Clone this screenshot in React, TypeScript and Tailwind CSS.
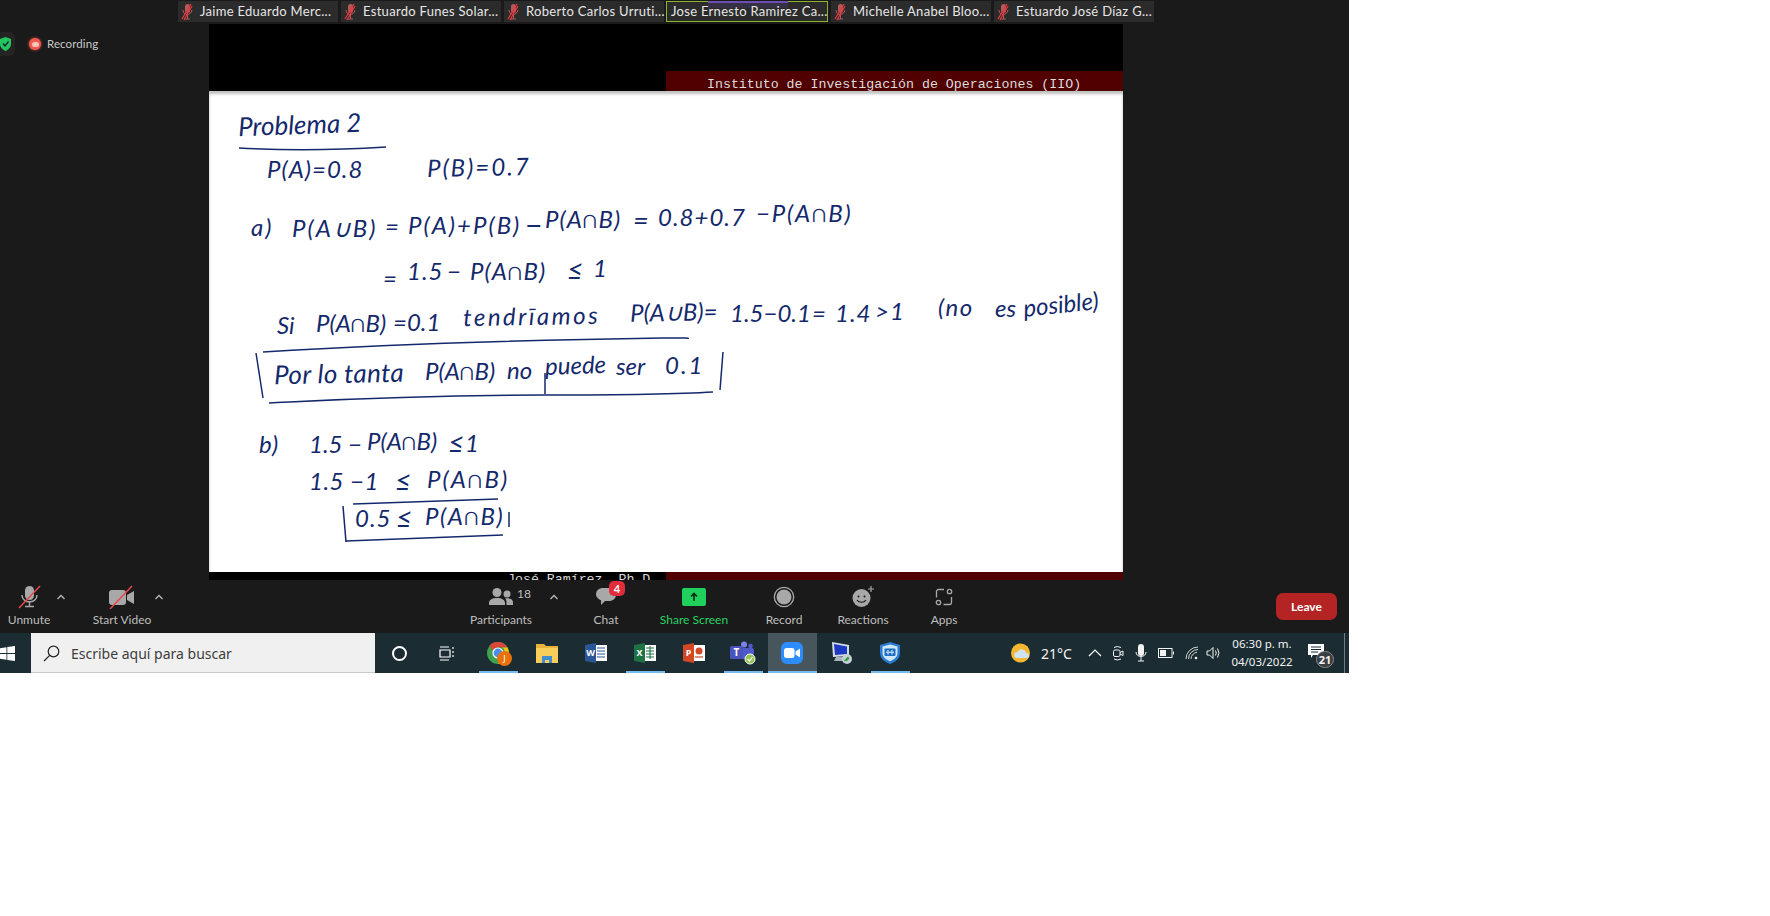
const ink = [
  { t: "Problema 2", c: "left-[29px] top-[20px] text-[26px] -rotate-2" },
  { t: "P(A)=0.8", c: "left-[58px] top-[66px] tracking-[1px]" },
  { t: "P(B)=0.7", c: "left-[218px] top-[64px] tracking-[2px] -rotate-1" },
  { t: "a)", c: "left-[42px] top-[124px] tracking-[2px]" },
  { t: "P(A∪B)", c: "left-[83px] top-[125px] tracking-[2px]" },
  { t: "=", c: "left-[176px] top-[123px]" },
  { t: "P(A)+P(B)", c: "left-[199px] top-[122px] tracking-[2px]" },
  { t: "−", c: "left-[316px] top-[118px] text-[30px]" },
  { t: "P(A∩B)", c: "left-[336px] top-[116px] tracking-[1px]" },
  { t: "=", c: "left-[424px] top-[115px] text-[27px]" },
  { t: "0.8+0.7", c: "left-[449px] top-[114px] tracking-[1px]" },
  { t: "−P(A∩B)", c: "left-[547px] top-[110px] tracking-[1.800px]" },
  { t: "=", c: "left-[174px] top-[175px] text-[18px]" },
  { t: "1.5", c: "left-[198px] top-[168px] tracking-[1px]" },
  { t: "−", c: "left-[238px] top-[168px]" },
  { t: "P(A∩B)", c: "left-[261px] top-[168px] tracking-[1px]" },
  { t: "≤", c: "left-[358px] top-[164px] text-[28px]" },
  { t: "1", c: "left-[384px] top-[165px]" },
  { t: "Si", c: "left-[68px] top-[222px] text-[22px]" },
  { t: "P(A∩B)", c: "left-[107px] top-[220px] text-[21px]" },
  { t: "=0.1", c: "left-[184px] top-[219px] text-[21px]" },
  { t: "tendrīamos", c: "left-[254px] top-[213px] tracking-[2.500px] -rotate-1" },
  { t: "P(A∪B)=", c: "left-[421px] top-[209px] text-[22px] -rotate-1" },
  { t: "1.5−0.1", c: "left-[521px] top-[210px] text-[22px]" },
  { t: "=", c: "left-[603px] top-[210px] text-[20px]" },
  { t: "1.4", c: "left-[626px] top-[210px] text-[21px] tracking-[1px]" },
  { t: ">1", c: "left-[666px] top-[208px] tracking-[1px]" },
  { t: "(no", c: "left-[729px] top-[204px] tracking-[1.500px]" },
  { t: "es", c: "left-[786px] top-[205px] text-[20px]" },
  { t: "posible)", c: "left-[814px] top-[201px] text-[23px] -rotate-6" },
  { t: "Por lo tanta", c: "left-[65px] top-[269px] text-[26px] tracking-[0.400px] -rotate-1" },
  { t: "P(A∩B)", c: "left-[216px] top-[268px] text-[21px]" },
  { t: "no", c: "left-[298px] top-[267px] text-[21px]" },
  { t: "puede", c: "left-[336px] top-[262px] text-[22px] -rotate-2" },
  { t: "ser", c: "left-[407px] top-[263px] text-[21px]" },
  { t: "0.1", c: "left-[456px] top-[262px] tracking-[2px]" },
  { t: "b)", c: "left-[50px] top-[341px] tracking-[1px]" },
  { t: "1.5 −", c: "left-[100px] top-[341px]" },
  { t: "P(A∩B)", c: "left-[158px] top-[338px]" },
  { t: "≤", c: "left-[239px] top-[337px] text-[28px]" },
  { t: "1", c: "left-[256px] top-[340px]" },
  { t: "1.5 −1", c: "left-[100px] top-[378px] tracking-[0.500px]" },
  { t: "≤", c: "left-[186px] top-[375px] text-[28px]" },
  { t: "P(A∩B)", c: "left-[218px] top-[376px] tracking-[2px]" },
  { t: "0.5", c: "left-[146px] top-[415px] tracking-[1px]" },
  { t: "≤", c: "left-[187px] top-[412px] text-[28px]" },
  { t: "P(A∩B)", c: "left-[216px] top-[413px] tracking-[1.500px]" },
];

const names = ["Jaime Eduardo Merc...", "Estuardo Funes Solar...", "Roberto Carlos Urruti..."];
const names2 = ["Michelle Anabel Bloo...", "Estuardo José Díaz G..."];

function MutedMic() {
  return (
    <svg width="12" height="18" viewBox="0 0 12 18" className="shrink-0">
      <rect x="4" y="1" width="5" height="9" rx="2.500" fill="#b25a5a" />
      <path d="M2 7c0 6 8 6 9 0M6.500 12v4M4 16h5" stroke="#b25a5a" fill="none" />
      <path d="M1 16 10 1M3 17 11 3" stroke="#e2383f" strokeWidth="1.300" />
    </svg>
  );
}

function Thumb({ name }: { name: string }) {
  return (
    <div className="w-[160px] h-[21px] bg-[#2b2b2b] flex items-center pl-[3px] gap-[7px] text-[13px] tracking-[0.300px] text-[#e6e6e6] whitespace-nowrap">
      <MutedMic />
      <span>{name}</span>
    </div>
  );
}

function Caret({ className }: { className: string }) {
  return (
    <svg width="10" height="6" viewBox="0 0 10 6" className={className}>
      <path d="M1.500 5 5 1.500 8.500 5" stroke="#b8b8b8" strokeWidth="1.300" fill="none" />
    </svg>
  );
}

function Tool({ label, className, color, children }: { label: string; className: string; color?: string; children: React.ReactNode }) {
  return (
    <div className={`flex flex-col items-center shrink-0 ${className}`}>
      <div className="h-[26px] flex items-center justify-center relative">{children}</div>
      <span className={`mt-[3px] text-[12px] leading-[14px] whitespace-nowrap ${color ?? "text-[#bebebe]"}`}>{label}</span>
    </div>
  );
}

function TaskIcon({ active, current, children }: { active?: boolean; current?: boolean; children: React.ReactNode }) {
  return (
    <div className={`relative w-[49px] h-full shrink-0 flex items-center justify-center ${current ? "bg-[#46565c]" : ""}`}>
      {children}
      {active && <div className={`absolute bottom-0 h-[2px] bg-[#76b9ed] ${current ? "inset-x-0" : "inset-x-[5px]"}`} />}
    </div>
  );
}

export default function App() {
  return (
    <div className="w-[1770px] h-[916px] bg-white font-['Lato',sans-serif]">
      <div className="w-[1349px] h-[673px] bg-[#1a1a1a] flex flex-col overflow-hidden relative">
        {/* participant strip */}
        <div className="h-[24px] shrink-0 pt-px pl-[178px] flex items-start gap-[3px]">
          {names.map((n) => (
            <Thumb key={n} name={n} />
          ))}
          <div className="relative w-[162px] h-[21px] -ml-px bg-[#2b2b2b] border border-[#8ab62f] flex items-center pl-[4px] text-[13px] tracking-[0.300px] text-[#e6e6e6] whitespace-nowrap">
            <div className="absolute top-[-1px] left-[41px] w-[80px] h-[2px] bg-[#6d4fb3]" />
            <div className="absolute top-px left-[41px] w-[80px] h-[5px] bg-[#3a3350] opacity-70" />
            <span className="relative">Jose Ernesto Ramirez Ca...</span>
          </div>
          {names2.map((n) => (
            <Thumb key={n} name={n} />
          ))}
        </div>

        {/* recording badges */}
        <div className="absolute left-0 top-[32px] w-[15px] h-[24px] bg-[#242424] rounded-r-md flex items-center justify-end pr-[4px]">
          <svg width="11" height="14" viewBox="0 0 11 14">
            <path d="M5.500 0 11 2v5c0 3.500-2.500 5.500-5.500 7C2.500 12.500 0 10.500 0 7V2z" fill="#22c55e" />
            <path d="M3 6.500 5 9l3.500-4.500" stroke="#123" strokeWidth="1.300" fill="none" />
          </svg>
        </div>
        <div className="absolute left-[29px] top-[36px] flex items-center gap-[6px] text-[11.500px] tracking-[0.100px] leading-[16px] text-[#c8c8c8]">
          <div className="w-[12px] h-[12px] rounded-full bg-[#f0594f] flex items-center justify-center shadow-[0_0_3px_#e5533d]">
            <div className="w-[7px] h-[5px] rounded-sm bg-[#ffc4b8]" />
          </div>
          Recording
        </div>

        {/* shared screen */}
        <div className="ml-[209px] w-[914px] h-[556px] shrink-0 bg-black flex flex-col">
          <div className="h-[67px] shrink-0 flex justify-end">
            <div className="w-[457px] mt-[47px] h-[20px] bg-[#500000] font-['Liberation_Mono',monospace] text-[13.270px] leading-[20px] text-[#dcdcdc] pl-[41px] pt-[4px] whitespace-nowrap overflow-hidden">
              Instituto de Investigación de Operaciones (IIO)
            </div>
          </div>
          <div className="relative h-[481px] shrink-0 bg-white shadow-[inset_0_3px_3px_rgba(0,0,0,0.25)] overflow-hidden font-['Lato',sans-serif] italic text-[#14296b]">
            {ink.map((s, i) => (
              <span key={i} className={`absolute whitespace-nowrap leading-none text-[24px] ${s.c}`}>
                {s.t}
              </span>
            ))}
            <svg className="absolute inset-0" width="914" height="481" viewBox="0 0 914 481" fill="none" stroke="#14296b" strokeWidth="1.500">
              <path d="M30 57q70 4 147-1" />
              <path d="M54 261C120 257 250 250 454 247c30 0 25 0 25 1" />
              <path d="M47 262l7 45" />
              <path d="M60 312c60-3 140-8 276-8 60 0 120 0 168-3" />
              <path d="M514 261l-3 38" />
              <path d="M336 282v21" />
              <path d="M144 413l145-5" />
              <path d="M134 415l3 36" />
              <path d="M137 450l157-6" />
              <path d="M300 421v15" />
            </svg>
          </div>
          <div className="h-[8px] shrink-0 flex overflow-hidden">
            <div className="w-[457px] bg-black text-[#d8d8d8] font-['Liberation_Mono',monospace] text-[13.270px] leading-[16px] pl-[298px] whitespace-nowrap">
              José Ramírez, Ph.D
            </div>
            <div className="flex-1 bg-[#500000]" />
          </div>
        </div>

        {/* zoom toolbar */}
        <div className="h-[53px] shrink-0 flex items-start pt-[4px]">
          <Tool label="Unmute" className="w-[50px] ml-[4px]">
            <svg width="30" height="24" viewBox="0 0 30 24">
              <rect x="11" y="1" width="9" height="14" rx="4.500" fill="#a8a8a8" />
              <path d="M8 10c0 9 15 9 15 0M15.500 16v5M11 21.500h9" stroke="#a8a8a8" strokeWidth="1.500" fill="none" />
              <path d="M5 23 26 1" stroke="#e5484d" strokeWidth="1.500" />
            </svg>
          </Tool>
          <Caret className="shrink-0 ml-[2px] mt-[10px]" />
          <Tool label="Start Video" className="w-[62px] ml-[25px]">
            <svg width="28" height="24" viewBox="0 0 28 24">
              <rect x="1" y="5" width="17" height="15" rx="3" fill="#a8a8a8" />
              <path d="M19 10l7-4v13l-7-4z" fill="#a8a8a8" />
              <path d="M2 24 24 1" stroke="#e5484d" strokeWidth="1.500" />
            </svg>
          </Tool>
          <Caret className="shrink-0 ml-[1px] mt-[10px]" />
          <Tool label="Participants" className="w-[80px] ml-[297px]">
            <svg width="24" height="18" viewBox="0 0 24 18">
              <circle cx="8" cy="4.500" r="4.500" fill="#a8a8a8" />
              <circle cx="18" cy="6" r="3.500" fill="#a8a8a8" />
              <path d="M0 17v-2c0-3 3-5 8-5s8 2 8 5v2zM17.500 17v-3c0-1-.5-3-1.500-3.500 5-1 8 1 8 4V17z" fill="#a8a8a8" />
            </svg>
            <span className="absolute left-full ml-[4px] top-[3px] text-[12px] leading-[14px] text-[#bebebe]">18</span>
          </Tool>
          <Caret className="shrink-0 ml-[8px] mt-[10px]" />
          <Tool label="Chat" className="w-[40px] ml-[27px]">
            <svg width="20" height="18" viewBox="0 0 20 18">
              <path d="M7 0h6c4 0 7 2.500 7 6.500S17 13 13 13H9l-4 4v-4.800C2 11 0 9 0 6.500 0 2.500 3 0 7 0z" fill="#a8a8a8" />
            </svg>
            <span className="absolute left-[13px] top-[-3px] w-[16px] h-[15px] rounded-[5px] bg-[#e02d3c] text-white text-[11px] font-bold leading-[15px] text-center">4</span>
          </Tool>
          <Tool label="Share Screen" className="w-[80px] ml-[28px]" color="text-[#27d163]">
            <div className="w-[24px] h-[18px] rounded-[2px] bg-[#1fd15c] flex items-center justify-center">
              <svg width="10" height="10" viewBox="0 0 10 10">
                <path d="M5 9V2M2 4.500 5 1.500l3 3" stroke="#0b2a16" strokeWidth="1.600" fill="none" />
              </svg>
            </div>
          </Tool>
          <Tool label="Record" className="w-[50px] ml-[25px]">
            <svg width="22" height="22" viewBox="0 0 22 22">
              <circle cx="11" cy="11" r="9.700" stroke="#a8a8a8" strokeWidth="1.300" fill="none" />
              <circle cx="11" cy="11" r="7.500" fill="#a8a8a8" />
            </svg>
          </Tool>
          <Tool label="Reactions" className="w-[60px] ml-[24px]">
            <svg width="24" height="24" viewBox="0 0 24 24">
              <circle cx="10.500" cy="13" r="9" fill="#a8a8a8" />
              <circle cx="7.500" cy="11.500" r="1" fill="#1a1a1a" />
              <circle cx="13.500" cy="11.500" r="1" fill="#1a1a1a" />
              <path d="M6 15c2 3 7 3 9 0" stroke="#1a1a1a" strokeWidth="1.200" fill="none" />
              <path d="M20 1v6M17 4h6" stroke="#a8a8a8" strokeWidth="1.200" />
            </svg>
          </Tool>
          <Tool label="Apps" className="w-[40px] ml-[31px]">
            <svg width="18" height="18" viewBox="0 0 18 18" fill="none" stroke="#a8a8a8" strokeWidth="1.300">
              <path d="M9 1.500H3.500a2 2 0 0 0-2 2v6M8.500 16.500h6a2 2 0 0 0 2-2V9" />
              <circle cx="14.500" cy="3.500" r="2.200" />
              <circle cx="3.500" cy="14.500" r="2.200" />
            </svg>
          </Tool>
          <div className="ml-auto mr-[12px] mt-[9px] w-[61px] h-[27px] rounded-[7px] bg-[#b42424] flex items-center justify-center text-white text-[12px] font-bold">
            Leave
          </div>
        </div>

        {/* windows taskbar */}
        <div className="h-[40px] shrink-0 bg-[#1b2d33] flex items-stretch font-['Noto_Sans',sans-serif] text-white">
          <div className="w-[31px] shrink-0 flex items-center">
            <svg width="15" height="15" viewBox="0 0 15 15" fill="#fff">
              <path d="M0 2.200 6.500 1.200V7H0zM7.300 1.100 15 0v7H7.300zM0 8h6.500v5.800L0 12.800zM7.300 8H15v7l-7.700-1.100z" />
            </svg>
          </div>
          <div className="w-[344px] shrink-0 bg-[#f0f0f0] flex items-center pl-[12px] pt-px gap-[11px] text-[14px] text-[#3d3d3d] border-b border-[#c9c9c9]">
            <svg width="17" height="17" viewBox="0 0 17 17" fill="none" stroke="#222" strokeWidth="1.200">
              <circle cx="10.500" cy="6.500" r="5.300" />
              <path d="M6.700 10.300 1 16" />
            </svg>
            Escribe aquí para buscar
          </div>
          <div className="w-[48px] shrink-0 flex items-center justify-center">
            <div className="w-[15px] h-[15px] rounded-full border-2 border-white" />
          </div>
          <div className="w-[48px] shrink-0 mr-[2.500px] flex items-center justify-center">
            <svg width="16" height="15" viewBox="0 0 16 15" fill="none" stroke="#fff" strokeWidth="1.200">
              <path d="M1 1h9M1 14h9M1 4h10v7H1zM14 1v2M14 5v2M14 9v2" />
            </svg>
          </div>
          <TaskIcon active>
            <div className="relative">
              <svg width="22" height="22" viewBox="0 0 22 22">
                <circle cx="11" cy="11" r="11" fill="#3fa14e" />
                <path d="M11 0a11 11 0 0 1 9.500 5.500H11A5.500 5.500 0 0 0 5.800 9L2.500 3.500A11 11 0 0 1 11 0z" fill="#d9473b" />
                <path d="M20.500 5.500A11 11 0 0 1 11 22l4.700-8.200a5.500 5.500 0 0 0 0-8.300z" fill="#f4c20d" />
                <circle cx="11" cy="11" r="5" fill="#4a8df0" stroke="#fff" strokeWidth="1.200" />
              </svg>
              <span className="absolute left-[10px] top-[9px] w-[15px] h-[15px] rounded-full bg-[#e8710a] text-[9px] leading-[15px] text-center text-white">J</span>
            </div>
          </TaskIcon>
          <TaskIcon>
            <svg width="22" height="20" viewBox="0 0 22 20">
              <path d="M0 1h8l2 2h12v4H0z" fill="#e8b33a" />
              <rect y="5" width="22" height="15" fill="#f7ce5a" />
              <path d="M6 13h10v7h-3v-3H9v3H6z" fill="#3f8ed0" />
            </svg>
          </TaskIcon>
          <TaskIcon>
            <svg width="22" height="20" viewBox="0 0 22 20">
              <rect x="7" y="2" width="15" height="16" fill="#fff" />
              <path d="M12 5h8M12 8h8M12 11h8M12 14h8" stroke="#2b5797" strokeWidth="1.100" />
              <path d="M0 2 11 0v20L0 18z" fill="#2b5797" />
              <text x="5.500" y="13" textAnchor="middle" fontSize="9" fontWeight="700" fill="#fff">W</text>
            </svg>
          </TaskIcon>
          <TaskIcon active>
            <svg width="22" height="20" viewBox="0 0 22 20">
              <rect x="7" y="2" width="15" height="16" fill="#fff" />
              <path d="M12 5h8M12 8h8M12 11h8M12 14h8M16 3v13" stroke="#1e7145" strokeWidth="1.100" />
              <path d="M0 2 11 0v20L0 18z" fill="#1e7145" />
              <text x="5.500" y="13" textAnchor="middle" fontSize="9" fontWeight="700" fill="#fff">X</text>
            </svg>
          </TaskIcon>
          <TaskIcon>
            <svg width="22" height="20" viewBox="0 0 22 20">
              <rect x="7" y="2" width="15" height="16" fill="#fff" />
              <circle cx="16" cy="8" r="3.500" fill="#d24726" />
              <path d="M12 14h8" stroke="#d24726" strokeWidth="1.200" />
              <path d="M0 2 11 0v20L0 18z" fill="#d24726" />
              <text x="5.500" y="13" textAnchor="middle" fontSize="9" fontWeight="700" fill="#fff">P</text>
            </svg>
          </TaskIcon>
          <TaskIcon active>
            <svg width="26" height="24" viewBox="0 0 26 24">
              <circle cx="14" cy="3.500" r="3" fill="#7b83eb" />
              <circle cx="20.500" cy="5" r="2.300" fill="#5059c9" />
              <rect x="10" y="7" width="14" height="11" rx="2" fill="#5059c9" />
              <rect x="0" y="5" width="13" height="13" rx="1.500" fill="#4b53bc" />
              <text x="6.500" y="15" textAnchor="middle" fontSize="10" fontWeight="700" fill="#fff">T</text>
              <circle cx="20" cy="18" r="5" fill="#92c353" stroke="#fff" />
              <path d="M17.500 18l2 2 3-4" stroke="#fff" strokeWidth="1.200" fill="none" />
            </svg>
          </TaskIcon>
          <TaskIcon active current>
            <div className="w-[22px] h-[22px] rounded-[6px] bg-[#2d8cff] flex items-center justify-center">
              <svg width="16" height="10" viewBox="0 0 16 10" fill="#fff">
                <rect width="10.500" height="10" rx="2.500" />
                <path d="M11.500 3.500 16 .5v9l-4.500-3z" />
              </svg>
            </div>
          </TaskIcon>
          <TaskIcon>
            <svg width="24" height="24" viewBox="0 0 24 24">
              <path d="M3 1l17 3v11L4 16z" fill="#d4dbe3" />
              <path d="M5 3l13 2.500V13L6 14z" fill="#1c39c4" />
              <path d="M7 16h9l3 4H5z" fill="#aab3bc" />
              <circle cx="18" cy="18" r="5" fill="#c7ced5" />
              <path d="M15.500 20l4-4M17 20l3-3" stroke="#2e9e3f" strokeWidth="1.300" />
            </svg>
          </TaskIcon>
          <TaskIcon active>
            <svg width="20" height="22" viewBox="0 0 20 22">
              <path d="M10 0l10 3v8c0 6-5 9-10 11C5 20 0 17 0 11V3z" fill="#2b7cd3" />
              <path d="M10 2.500l7.500 2v6.500c0 4-3.500 6.500-7.500 8.200-4-1.700-7.500-4.200-7.500-8.200V4.500z" fill="#cfe6fb" />
              <rect x="4.500" y="6.500" width="11" height="7.500" rx="1" fill="#1b6ec2" />
              <path d="M8 8v1.500M12 8v1.500M8 11v1.500M12 11v1.500M6 10.200h8" stroke="#fff" />
            </svg>
          </TaskIcon>

          {/* tray */}
          <div className="ml-auto flex items-center text-[#f2f2f2] pr-[4px]">
            <svg width="20" height="20" viewBox="0 0 20 20" className="mr-[10px]">
              <circle cx="9.500" cy="10" r="9.500" fill="#f5b731" />
              <path d="M6 15a3 3 0 0 1 .5-6 4.500 4.500 0 0 1 8.500 1 2.500 2.500 0 0 1 1 5z" fill="#cfe3f2" />
            </svg>
            <span className="text-[14px] w-[47px]">21°C</span>
            <svg width="14" height="8" viewBox="0 0 14 8" className="mr-[10px]">
              <path d="M1 7l6-6 6 6" stroke="#fff" strokeWidth="1.200" fill="none" />
            </svg>
            <svg width="13" height="16" viewBox="0 0 13 16" className="mr-[10px]" fill="none" stroke="#f2f2f2">
              <rect x="1.500" y="5" width="6.500" height="6.500" rx="1.500" />
              <path d="M8 7.500l3-1.500v4.500l-3-1.500M2 2.500q3-2 7 0M2 14q3 2 7 0" />
            </svg>
            <svg width="12" height="18" viewBox="0 0 12 18" className="mr-[11px]" fill="#f2f2f2">
              <rect x="3" y="0" width="6" height="12" rx="3" />
              <path d="M1 8c0 6 10 6 10 0M6 13v4M3 17h6" stroke="#f2f2f2" fill="none" />
            </svg>
            <svg width="16" height="10" viewBox="0 0 16 10" className="mr-[11px]" fill="none" stroke="#f2f2f2">
              <rect x=".5" y=".5" width="13.500" height="9" />
              <rect x="2" y="2" width="6" height="6" fill="#f2f2f2" stroke="none" />
              <path d="M15.500 3.500v3" />
            </svg>
            <svg width="14" height="14" viewBox="0 0 14 14" className="mr-[7px]" fill="none" stroke="#cfd4d6">
              <path d="M1 13a12 12 0 0 1 12-12M3.500 13a9.500 9.500 0 0 1 9.500-9.500M6 13a7 7 0 0 1 6-6.800" />
              <circle cx="11" cy="12" r="1.300" fill="#f2f2f2" stroke="none" />
            </svg>
            <svg width="16" height="14" viewBox="0 0 16 14" className="mr-[9px]" fill="none" stroke="#f2f2f2">
              <path d="M1 5h2.500L7 1.500v11L3.500 9H1zM9.500 4.500q1.500 2.500 0 5M11.500 2.500q3 4.500 0 9" />
            </svg>
            <div className="w-[62px] text-[11.500px] leading-[18px] text-center text-[#f2f2f2]">
              <div>06:30 p. m.</div>
              <div>04/03/2022</div>
            </div>
            <div className="relative ml-[15px] mr-[20px] w-[16px] h-[14px] -mt-[4px]">
              <svg width="16" height="14" viewBox="0 0 16 14">
                <path d="M0 0h16v11H5l-2 3v-3H0z" fill="#fff" />
                <path d="M3 3h10M3 5.500h10M3 8h7" stroke="#1b2d33" />
              </svg>
              <span className="absolute left-[8px] top-[7px] w-[18px] h-[17px] rounded-full bg-[#3a3f42] border border-[#888] text-[11px] leading-[15px] text-center font-bold">21</span>
            </div>
            <div className="w-px h-[40px] bg-[#6e7b80]" />
          </div>
        </div>
      </div>
    </div>
  );
}
